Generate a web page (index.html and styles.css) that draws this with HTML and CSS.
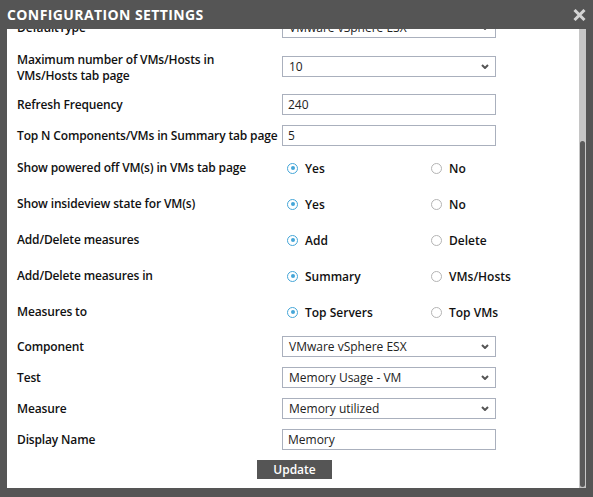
FILE: index.html
```html
<!DOCTYPE html>
<html lang="en">
<head>
<meta charset="utf-8">
<title>Configuration Settings</title>
<link rel="stylesheet" href="styles.css">
</head>
<body>
<div class="dialog">
  <div class="titlebar">
    <span class="title">CONFIGURATION SETTINGS</span>
    <svg class="close" width="13" height="12" viewBox="0 0 13 12"><path d="M1.5 1 L11.5 11 M11.5 1 L1.5 11" stroke="#d4d4d4" stroke-width="3" stroke-linecap="butt"/></svg>
  </div>
  <div class="main">
    <div class="content">
      <div class="inner">
        <div class="row">
          <div class="label">DefaultType</div>
          <div class="field select"><span>VMware vSphere ESX</span><svg class="chev" width="8" height="5" viewBox="0 0 8 5"><path d="M1 1 L4 4 L7 1" fill="none" stroke="#555" stroke-width="2"/></svg></div>
        </div>
        <div class="row tall">
          <div class="label">Maximum number of VMs/Hosts in<br>VMs/Hosts tab page</div>
          <div class="field select"><span>10</span><svg class="chev" width="8" height="5" viewBox="0 0 8 5"><path d="M1 1 L4 4 L7 1" fill="none" stroke="#555" stroke-width="2"/></svg></div>
        </div>
        <div class="row">
          <div class="label">Refresh Frequency</div>
          <input class="field text" type="text" value="240">
        </div>
        <div class="row">
          <div class="label">Top N Components/VMs in Summary tab page</div>
          <input class="field text" type="text" value="5">
        </div>
        <div class="row radio">
          <div class="label">Show powered off VM(s) in VMs tab page</div>
          <div class="options">
            <span class="opt"><span class="dot on"></span>Yes</span>
            <span class="opt"><span class="dot"></span>No</span>
          </div>
        </div>
        <div class="row radio">
          <div class="label">Show insideview state for VM(s)</div>
          <div class="options">
            <span class="opt"><span class="dot on"></span>Yes</span>
            <span class="opt"><span class="dot"></span>No</span>
          </div>
        </div>
        <div class="row radio">
          <div class="label">Add/Delete measures</div>
          <div class="options">
            <span class="opt"><span class="dot on"></span>Add</span>
            <span class="opt"><span class="dot"></span>Delete</span>
          </div>
        </div>
        <div class="row radio">
          <div class="label">Add/Delete measures in</div>
          <div class="options">
            <span class="opt"><span class="dot on"></span>Summary</span>
            <span class="opt"><span class="dot"></span>VMs/Hosts</span>
          </div>
        </div>
        <div class="row radio">
          <div class="label">Measures to</div>
          <div class="options">
            <span class="opt"><span class="dot on"></span>Top Servers</span>
            <span class="opt"><span class="dot"></span>Top VMs</span>
          </div>
        </div>
        <div class="row">
          <div class="label">Component</div>
          <div class="field select"><span>VMware vSphere ESX</span><svg class="chev" width="8" height="5" viewBox="0 0 8 5"><path d="M1 1 L4 4 L7 1" fill="none" stroke="#555" stroke-width="2"/></svg></div>
        </div>
        <div class="row">
          <div class="label">Test</div>
          <div class="field select"><span>Memory Usage - VM</span><svg class="chev" width="8" height="5" viewBox="0 0 8 5"><path d="M1 1 L4 4 L7 1" fill="none" stroke="#555" stroke-width="2"/></svg></div>
        </div>
        <div class="row">
          <div class="label">Measure</div>
          <div class="field select"><span>Memory utilized</span><svg class="chev" width="8" height="5" viewBox="0 0 8 5"><path d="M1 1 L4 4 L7 1" fill="none" stroke="#555" stroke-width="2"/></svg></div>
        </div>
        <div class="row">
          <div class="label">Display Name</div>
          <input class="field text" type="text" value="Memory">
        </div>
        <div class="actions">
          <button class="btn" type="button">Update</button>
        </div>
      </div>
    </div>
    <div class="scrollbar"><div class="thumb"></div></div>
  </div>
</div>
</body>
</html>
```
FILE: styles.css
```css
html, body {
  margin: 0;
  padding: 0;
}
body {
  background: #555555;
  font-family: "Open Sans", "Liberation Sans", sans-serif;
  width: 593px;
  height: 497px;
  overflow: hidden;
}
.dialog {
  display: flex;
  flex-direction: column;
  height: 497px;
}
.titlebar {
  height: 29px;
  flex: none;
  display: flex;
  align-items: center;
  justify-content: space-between;
  padding: 0 7px;
}
.title {
  color: #ffffff;
  font-weight: 700;
  font-size: 14px;
  line-height: 29px;
  letter-spacing: 0.4px;
}
.close {
  display: block;
  margin-top: 1px;
}
.main {
  flex: 1;
  min-height: 0;
  display: flex;
  margin: 0 7px 9px 7px;
}
.content {
  flex: 1;
  background: #ffffff;
  overflow: hidden;
}
.inner {
  margin-top: -17px;
}
.row {
  display: grid;
  grid-template-columns: 265px 214px;
  align-items: center;
  height: 31px;
  padding-left: 10px;
}
.row.tall {
  height: 46px;
}
.row.tall .label {
  padding-top: 3px;
}
.row.radio {
  height: 36px;
  padding-bottom: 2px;
  box-sizing: border-box;
}
.label {
  font-size: 12px;
  font-weight: 600;
  line-height: 16px;
  color: #111111;
  white-space: nowrap;
  letter-spacing: -0.15px;
}
.field {
  box-sizing: border-box;
  height: 21px;
  width: 214px;
  border: 1px solid #aab0bd;
  background: #ffffff;
  font-family: "Open Sans", "Liberation Sans", sans-serif;
  font-size: 12px;
  color: #222222;
}
.select {
  display: flex;
  align-items: center;
  justify-content: space-between;
  padding: 0 6px 0 6px;
}
.chev {
  display: block;
}
.text {
  margin: 0;
  padding: 0 5px;
  outline: none;
}
.options {
  display: flex;
  padding-left: 5px;
}
.opt {
  flex: none;
  width: 144px;
  display: flex;
  align-items: center;
  font-size: 12px;
  font-weight: 600;
  color: #111111;
}
.dot {
  flex: none;
  box-sizing: border-box;
  width: 11px;
  height: 11px;
  border-radius: 50%;
  border: 1px solid #b4b4b4;
  background: #ffffff;
  margin-right: 7px;
  display: flex;
  align-items: center;
  justify-content: center;
}
.dot.on {
  border-color: #45a6d8;
}
.dot.on::after {
  content: "";
  width: 4px;
  height: 4px;
  border-radius: 50%;
  background: #45a6d8;
}
.actions {
  display: flex;
  justify-content: center;
  padding: 5px 0 0 3px;
}
.btn {
  width: 75px;
  height: 19px;
  border: none;
  background: #555555;
  color: #ffffff;
  font-family: "Open Sans", "Liberation Sans", sans-serif;
  font-size: 12px;
  font-weight: 600;
  padding: 0;
  line-height: 19px;
}
.scrollbar {
  width: 7px;
  flex: none;
  background: #c6c6c6;
  display: flex;
  flex-direction: column;
  justify-content: flex-end;
}
.thumb {
  height: 346px;
  margin: 0 1px 1px 1px;
  background: #5a5a5a;
  border-radius: 3px;
}
```
